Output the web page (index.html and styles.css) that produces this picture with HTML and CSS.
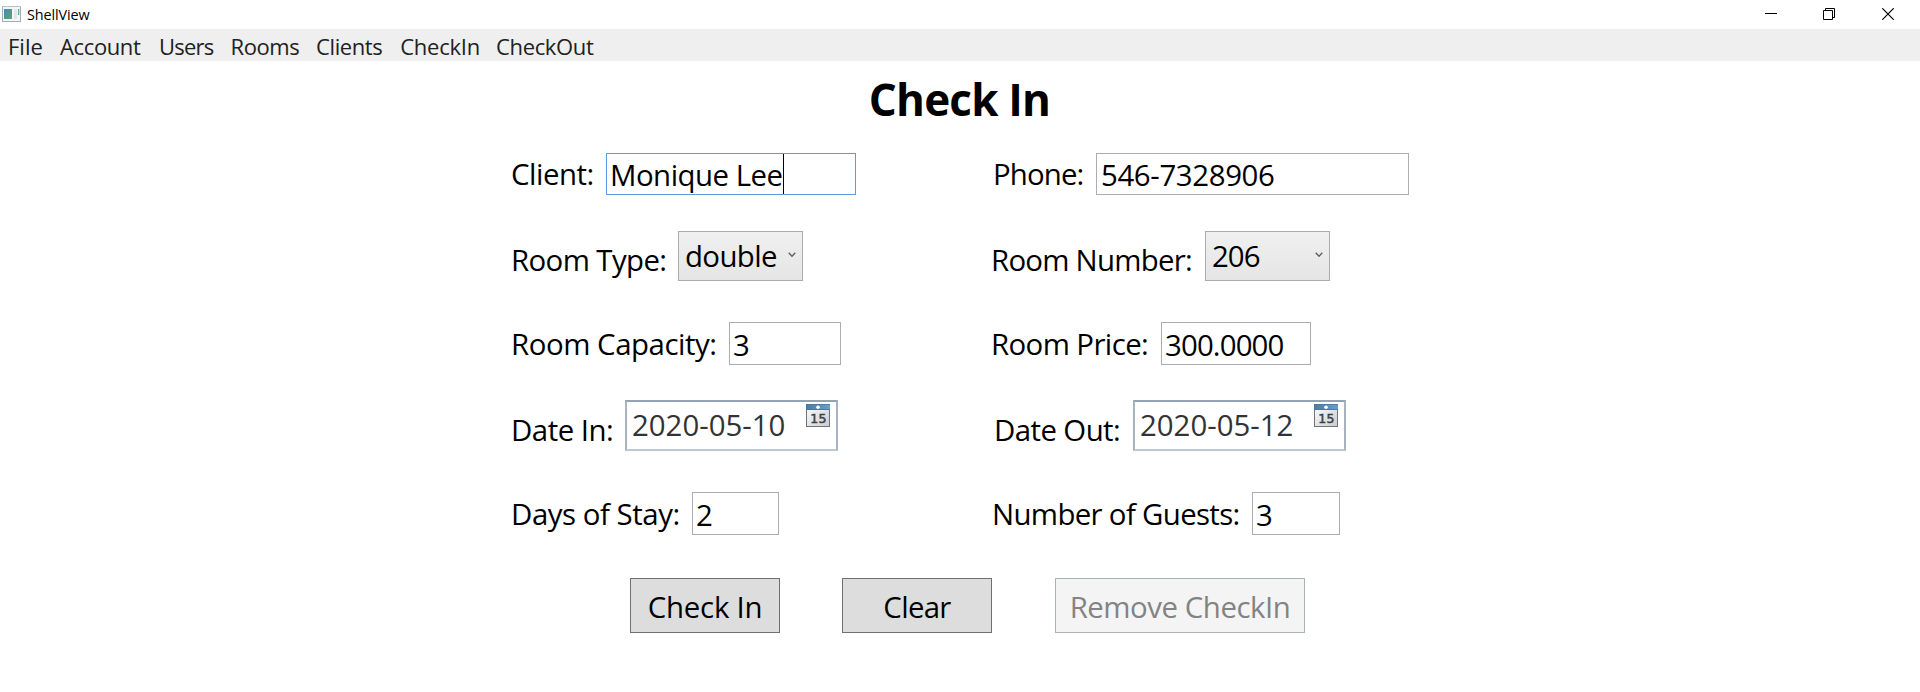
FILE: index.html
```
<!DOCTYPE html>
<html lang="en">
<head>
<meta charset="utf-8">
<title>ShellView</title>
<link rel="stylesheet" href="styles.css">
</head>
<body>
<svg width="0" height="0" class="defs" aria-hidden="true">
  <defs>
    <linearGradient id="calHead" x1="0" y1="0" x2="1" y2="0"><stop offset="0" stop-color="#4a7ba5"/><stop offset="1" stop-color="#66a0d2"/></linearGradient>
    <linearGradient id="calPage" x1="0" y1="0" x2="1" y2="1"><stop offset="0" stop-color="#ffffff"/><stop offset="1" stop-color="#c9cbd0"/></linearGradient>
    <linearGradient id="appFill" x1="0" y1="0" x2="1" y2="1"><stop offset="0" stop-color="#4f86a8"/><stop offset="1" stop-color="#58a878"/></linearGradient>
  </defs>
</svg>
<header class="titlebar">
  <svg class="app-icon" width="19" height="16" viewBox="0 0 19 16">
    <rect x="0.5" y="0.5" width="18" height="15" fill="#f4f5f7" stroke="#a3acb8"/>
    <path d="M0 .5h19" stroke="#b9c0c8"/>
    <rect x="2" y="3" width="8" height="10" fill="url(#appFill)"/>
    <rect x="12" y="3" width="3" height="10" fill="#e3e6ea"/>
    <rect x="16" y="3" width="1.3" height="6" fill="#68ad87"/>
  </svg>
  <span class="app-name">ShellView</span>
  <div class="window-buttons">
    <svg width="12" height="12" viewBox="0 0 12 12"><path d="M0 5.5h12" stroke="#000"/></svg>
    <svg width="12" height="12" viewBox="0 0 12 12"><path d="M.5 2.5h9v9h-9zM2.5 2.5v-2h9v9h-2" fill="none" stroke="#000"/></svg>
    <svg width="12" height="12" viewBox="0 0 12 12"><path d="M.3.3l11.4 11.4M11.7.3L.3 11.7" stroke="#000" stroke-width="1.2"/></svg>
  </div>
</header>
<nav class="menu">
  <span class="m-file">File</span><span class="m-account">Account</span><span class="m-users">Users</span><span class="m-rooms">Rooms</span><span class="m-clients">Clients</span><span class="m-checkin">CheckIn</span><span class="m-checkout">CheckOut</span>
</nav>
<main>
  <h1>Check In</h1>
  <div class="form">
    <div class="row row-client">
      <div class="field"><label class="l-client">Client:</label><div class="input i-client focused"><span>Monique Lee</span><i class="caret"></i></div></div>
      <div class="field"><label class="l-phone">Phone:</label><div class="input i-phone">546-7328906</div></div>
    </div>
    <div class="row row-room">
      <div class="field"><label class="l-type">Room Type:</label><div class="combo"><span class="combo-text c-type">double</span><svg class="chevron" width="8" height="6" viewBox="0 0 8 6"><path d="M.7.8L4 4.2 7.3.8" fill="none" stroke="#606060" stroke-width="1.4"/></svg></div></div>
      <div class="field"><label class="l-number">Room Number:</label><div class="combo"><span class="combo-text c-number">206</span><svg class="chevron" width="8" height="6" viewBox="0 0 8 6"><path d="M.7.8L4 4.2 7.3.8" fill="none" stroke="#606060" stroke-width="1.4"/></svg></div></div>
    </div>
    <div class="row row-capacity">
      <div class="field"><label class="l-capacity">Room Capacity:</label><div class="input i-capacity">3</div></div>
      <div class="field"><label class="l-price">Room Price:</label><div class="input i-price">300.0000</div></div>
    </div>
    <div class="row row-date">
      <div class="field"><label class="l-datein">Date In:</label><div class="date"><span>2020-05-10</span>
        <svg class="calendar" width="24" height="23" viewBox="0 0 24 23"><rect x=".5" y=".5" width="23" height="22" fill="url(#calPage)" stroke="#707378"/><rect x="0" y="0" width="24" height="6" fill="url(#calHead)"/><path d="M0 .5h24M0 5.5h24" stroke="#4d7190" stroke-opacity=".7"/><circle cx="12" cy="3.3" r="1.8" fill="#fff"/><text x="12.6" y="18.8" text-anchor="middle" class="cal-text">15</text></svg></div></div>
      <div class="field"><label class="l-dateout">Date Out:</label><div class="date"><span>2020-05-12</span>
        <svg class="calendar" width="24" height="23" viewBox="0 0 24 23"><rect x=".5" y=".5" width="23" height="22" fill="url(#calPage)" stroke="#707378"/><rect x="0" y="0" width="24" height="6" fill="url(#calHead)"/><path d="M0 .5h24M0 5.5h24" stroke="#4d7190" stroke-opacity=".7"/><circle cx="12" cy="3.3" r="1.8" fill="#fff"/><text x="12.6" y="18.8" text-anchor="middle" class="cal-text">15</text></svg></div></div>
    </div>
    <div class="row row-stay">
      <div class="field"><label class="l-days">Days of Stay:</label><div class="input i-days">2</div></div>
      <div class="field"><label class="l-guests">Number of Guests:</label><div class="input i-guests">3</div></div>
    </div>
  </div>
  <div class="actions">
    <button class="b-checkin">Check In</button>
    <button class="b-clear">Clear</button>
    <button class="b-remove" disabled>Remove CheckIn</button>
  </div>
</main>
</body>
</html>
```
FILE: styles.css
```
* { box-sizing: border-box; }
body { margin: 0; height: 692px; overflow: hidden; background: #fff; color: #000; font-family: "Open Sans", "Noto Sans", sans-serif; }
.defs { position: absolute; }

.titlebar { display: flex; height: 29px; padding-left: 2px; }
.app-icon { margin-top: 6px; }
.app-name { margin-left: 6px; font-size: 14.4px; line-height: 29px; letter-spacing: -.1px; }
.window-buttons { display: flex; gap: 47px; margin: 8px 26px 0 auto; }
.window-buttons svg { display: block; }
.window-buttons svg:first-child { margin-right: -1px; }

.menu { display: flex; height: 32px; padding: 1px 0 0 8px; background: #efefef; color: #212121; font-size: 22px; line-height: 32px; white-space: nowrap; }
.m-file { width: 52px; }
.m-account { width: 99px; letter-spacing: -.37px; }
.m-users { width: 71.5px; letter-spacing: -.8px; }
.m-rooms { width: 85.5px; letter-spacing: -.4px; }
.m-clients { width: 84.2px; letter-spacing: -.39px; }
.m-checkin { width: 95.8px; letter-spacing: -.24px; }
.m-checkout { letter-spacing: -.34px; }

main { padding-top: 8px; }
h1 { margin: 0; height: 84px; padding-right: 1px; text-align: center; font-size: 44px; line-height: 60px; letter-spacing: -.8px; }

.form { width: 960px; margin-left: 510px; }
.row { display: grid; grid-template-columns: 480px 480px; }
.row-client { height: 78px; }
.row-room { height: 91px; }
.row-capacity { height: 78px; }
.row-date { height: 92px; }
.row-stay { height: 86px; }
.field { display: flex; align-items: flex-start; font-size: 29.4px; white-space: nowrap; }
label { flex: none; line-height: 42px; }
.row-room label { padding-top: 8px; }
.row-capacity label, .row-stay label { line-height: 44px; }
.row-date label { padding-top: 9px; }
.l-client { width: 96px; padding-left: 1px; letter-spacing: -.48px; }
.l-phone { width: 106px; padding-left: 3px; letter-spacing: -.88px; }
.l-type { width: 168px; padding-left: 1px; letter-spacing: -.6px; }
.l-number { width: 215px; padding-left: 1px; letter-spacing: -.75px; }
.l-capacity { width: 219px; padding-left: 1px; letter-spacing: -.45px; }
.l-price { width: 171px; padding-left: 1px; letter-spacing: -.6px; }
.l-datein { width: 115px; padding-left: 1px; letter-spacing: -.5px; }
.l-dateout { width: 143px; padding-left: 4px; letter-spacing: -.58px; }
.l-days { width: 182px; padding-left: 1px; letter-spacing: -.45px; }
.l-guests { width: 262px; padding-left: 2px; letter-spacing: -.66px; }

.input { display: flex; height: 42px; padding-left: 4px; border: 1px solid #abadb3; background: #fff; line-height: 42px; }
.row-capacity .input, .row-stay .input { height: 43px; line-height: 44px; padding-left: 3px; }
.focused { border-color: #569de5; }
.i-client { width: 250px; letter-spacing: -.5px; padding-left: 3px; }
.i-phone { width: 313px; letter-spacing: -.37px; }
.i-capacity { width: 112px; }
.i-price { width: 150px; letter-spacing: -.86px; }
.i-days { width: 87px; }
.i-guests { width: 88px; }
.caret { width: 1px; height: 40px; background: #000; }

.combo { display: flex; width: 125px; height: 50px; padding-left: 6px; border: 1px solid #acacac; background: linear-gradient(#f0f0f0, #e5e5e5); line-height: 49px; }
.combo-text { width: 92px; overflow: hidden; }
.c-type { letter-spacing: -.62px; }
.c-number { letter-spacing: -.95px; }
.chevron { margin: 20px 0 0 11px; }

.date { display: flex; width: 213px; height: 51px; padding-left: 5px; border: 2px solid #a7b4c0; border-top-color: #94a3b1; border-bottom-color: #bdc8d2; color: #333; line-height: 46px; letter-spacing: 0; }
.date span { width: 174px; }
.calendar { display: block; margin-top: 2px; }
.cal-text { font: 12.5px "DejaVu Sans", sans-serif; letter-spacing: .3px; fill: #3c3f43; stroke: #3c3f43; stroke-width: .5px; }

.actions { display: flex; margin-left: 630px; }
button { height: 55px; padding: 3px 0 0; border: 1px solid #707070; border-radius: 0; background: #ddd; color: #000; font: 29.4px "Open Sans", sans-serif; }
.b-checkin { width: 150px; letter-spacing: -.23px; }
.b-clear { width: 150px; margin-left: 62px; letter-spacing: -.69px; }
.b-remove { width: 250px; margin-left: 63px; letter-spacing: -.46px; border-color: #adb2b5; background: #f4f4f4; color: #838383; }
```
